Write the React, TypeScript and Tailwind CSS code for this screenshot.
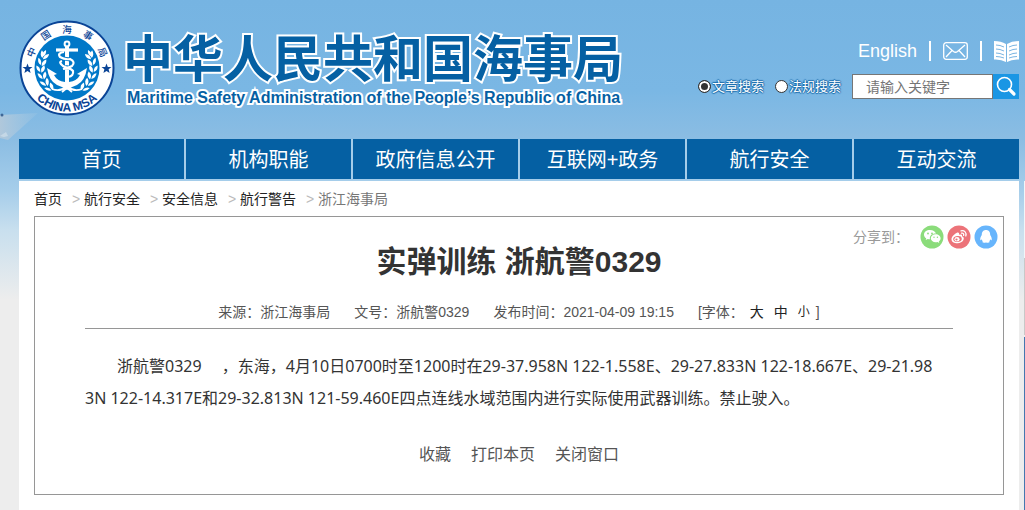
import React from 'react';

const navItems = ['首页', '机构职能', '政府信息公开', '互联网+政务', '航行安全', '互动交流'];

const crumbs = ['首页', '航行安全', '安全信息', '航行警告'];

const notice =
  '浙航警0329\u3000\u00a0，东海，4月10日0700时至1200时在29-37.958N 122-1.558E、29-27.833N 122-18.667E、29-21.983N 122-14.317E和29-32.813N 121-59.460E四点连线水域范围内进行实际使用武器训练。禁止驶入。';

// characters round the top of the badge, with their angle from the vertical
const ringTop = [
  { char: '中', angle: -66 },
  { char: '国', angle: -33 },
  { char: '海', angle: 0 },
  { char: '事', angle: 33 },
  { char: '局', angle: 66 },
];

const leaves = [
  { x: 24, y: 36, angle: 20 },
  { x: 22, y: 43, angle: 5 },
  { x: 21, y: 50, angle: -8 },
  { x: 23, y: 57, angle: -20 },
  { x: 26, y: 64, angle: -35 },
  { x: 31, y: 69, angle: -50 },
];

const LaurelBranch: React.FC = () => (
  <g fill="#fff">
    {leaves.map(leaf => (
      <g key={leaf.y} transform={`translate(${leaf.x} ${leaf.y}) rotate(${leaf.angle})`}>
        <path d="M0 2Q-4 0 -3 -5Q1 -3 0 2Z" />
        <path d="M1 3Q0 -2 5 -4Q6 1 1 3Z" />
      </g>
    ))}
    <path d="M27 30Q22 33 23 37Q28 35 27 30Z" />
  </g>
);

const Badge: React.FC = () => (
  <svg viewBox="0 0 96 96" className="size-24 shrink-0" role="img" aria-label="中国海事局">
    <circle cx="48" cy="48" r="46.5" fill="#fff" stroke="#0a4496" strokeWidth="2" />
    <circle cx="48" cy="48" r="32.5" fill="#0078c8" />
    <LaurelBranch />
    <g transform="matrix(-1 0 0 1 96 0)">
      <LaurelBranch />
    </g>
    <g fill="none" stroke="#fff">
      <circle cx="48" cy="24" r="2.4" strokeWidth="2" />
      <path d="M37 30H59" strokeWidth="3.2" />
      <path d="M48 27V62" strokeWidth="4" />
      <path d="M33 69Q41 72 47 67L53 72M63 69Q55 72 49 67L43 72" strokeWidth="1.8" />
    </g>
    <g fill="none" stroke="#0078c8" strokeWidth="4">
      <path d="M43 37Q47 40 52 39M44 48Q50 46 53 50" />
    </g>
    <path
      d="M45 32Q38 33 41 37Q46 40 51 39Q57 42 53 46Q48 49 44 46Q39 42 43 41M44 49Q51 47 54 51Q55 56 49 57"
      fill="none"
      stroke="#fff"
      strokeWidth="2.2"
    />
    <path
      d="M28 48L38 54L35 55Q38 61 46 62V55H50V62Q58 61 61 55L58 54L68 48Q66 61 58 65Q52 67 48 70Q44 67 38 65Q30 61 28 48Z"
      fill="#fff"
    />
    <g fill="#0a4496">
      {ringTop.map(item => (
        <text
          key={item.char}
          x="48"
          y="12.5"
          textAnchor="middle"
          fontSize="9.5"
          fontWeight="500"
          fontFamily="'Noto Sans CJK SC', sans-serif"
          transform={`rotate(${item.angle} 48 48)`}
        >
          {item.char}
        </text>
      ))}
      <path id="badge-arc" d="M4.500 48A43.500 43.500 0 0 0 91.500 48" fill="none" />
      <text fontSize="12" fontWeight="700" fontFamily="'Liberation Sans', sans-serif" textAnchor="middle">
        <textPath href="#badge-arc" startOffset="50%">CHINA MSA</textPath>
      </text>
      <path d="M8.500 43.500L9.800 47H13.500L10.600 49.300L11.600 53L8.500 50.900L5.400 53L6.400 49.300L3.500 47H7.200Z" />
      <path d="M87.500 43.500L88.800 47H92.500L89.600 49.300L90.600 53L87.500 50.900L84.400 53L85.400 49.300L82.500 47H86.200Z" />
    </g>
  </svg>
);

const Ship: React.FC = () => (
  <svg viewBox="0 0 60 50" className="absolute left-0 top-[102px] h-[50px] w-[60px]" aria-hidden="true">
    <defs>
      <linearGradient id="hull" x1="0" x2="1" y1="0" y2="0">
        <stop offset="0" stopColor="#b5c9da" stopOpacity="0.9" />
        <stop offset="1" stopColor="#a9cbe3" stopOpacity="0.2" />
      </linearGradient>
    </defs>
    <path d="M0 13L38 11L8 38L0 36Z" fill="url(#hull)" />
    <path d="M0 34L6 30L8 34L4 35Z" fill="#d5e2ec" opacity="0.6" />
    <circle cx="2" cy="13" r="1.500" fill="#3f6796" />
  </svg>
);

const MailIcon: React.FC = () => (
  <svg viewBox="0 0 25 18" className="h-[18px] w-[25px]" fill="none" stroke="#fff" strokeWidth="1.3">
    <rect x="0.700" y="0.700" width="23.600" height="16.600" rx="2.500" />
    <path d="M3 3L10.500 9.500Q12.500 11 14.500 9.500L22 3M3 15L9 8.500M22 15L16 8.500" />
  </svg>
);

const BookIcon: React.FC = () => (
  <svg viewBox="0 0 25 21" className="h-[21px] w-[25px]">
    <path d="M0 0Q7 0 12 3V21Q7 18 0 18.500ZM25 0Q18 0 13 3V21Q18 18 25 18.500Z" fill="#fff" />
    <path
      d="M2 4Q6 4 10 6M2 8Q6 8 10 10M2 12Q6 12 10 14M2 15.500Q6 15.500 10 17M23 4Q19 4 15 6M23 8Q19 8 15 10M23 12Q19 12 15 14M23 15.500Q19 15.500 15 17"
      fill="none"
      stroke="#7ab5e2"
      strokeWidth="1"
    />
  </svg>
);

const SearchIcon: React.FC = () => (
  <svg viewBox="0 0 26 25" className="h-[25px] w-[26px]" fill="none" stroke="#fff">
    <circle cx="11.500" cy="10.500" r="7" strokeWidth="1.600" />
    <path d="M16.500 15.500L21 20" strokeWidth="3.200" strokeLinecap="round" />
  </svg>
);

const WechatIcon: React.FC = () => (
  <svg viewBox="0 0 24 24" className="size-6">
    <circle cx="12" cy="12" r="11.500" fill="#8bdc7b" />
    <path d="M10 5C6.500 5 4 7 4 9.700C4 11.200 4.900 12.500 6.200 13.300L5.700 15L7.800 14C8.500 14.200 9.200 14.300 10 14.300C9 10.800 12.500 8.300 16 8.600C15.400 6.500 13 5 10 5Z" fill="#fff" />
    <path d="M15.700 9.300C12.900 9.300 10.800 11.100 10.800 13.300C10.800 15.600 13 17.300 15.700 17.300C16.300 17.300 16.900 17.200 17.500 17L19.300 18L18.800 16.400C20 15.700 20.600 14.600 20.600 13.300C20.600 11.100 18.400 9.300 15.700 9.300Z" fill="#fff" />
    <g fill="#8bdc7b">
      <circle cx="8" cy="8.500" r="0.900" />
      <circle cx="12" cy="8.500" r="0.900" />
      <circle cx="14" cy="12.200" r="0.700" />
      <circle cx="17.400" cy="12.200" r="0.700" />
    </g>
  </svg>
);

const WeiboIcon: React.FC = () => (
  <svg viewBox="0 0 24 24" className="size-6">
    <circle cx="12" cy="12" r="11.500" fill="#ec7379" />
    <path d="M9.500 8C11.500 7 12.500 8 12 9.800C14 9 15.600 9.500 15 11.300C19 12.800 16 18.300 10.500 18.300C7 18.300 4.500 16.700 4.500 14.200C4.500 12 7 9.200 9.500 8Z" fill="#fff" />
    <ellipse cx="10.500" cy="14" rx="4.300" ry="3" fill="#ec7379" transform="rotate(-8 10.500 14)" />
    <ellipse cx="10" cy="14.200" rx="2.600" ry="2.200" fill="#fff" />
    <circle cx="9.500" cy="14.500" r="1.100" fill="#ec7379" />
    <path d="M14 5.800C17.500 5 19.800 7.800 18.800 11M14.500 8.200C16.200 7.900 17.100 9 16.600 10.500" fill="none" stroke="#fff" strokeWidth="1.300" strokeLinecap="round" />
  </svg>
);

const QQIcon: React.FC = () => (
  <svg viewBox="0 0 24 24" className="size-6">
    <circle cx="12" cy="12" r="11.500" fill="#67b5fc" />
    <path d="M12 5C9 5 7.700 7.300 7.800 10C6.700 11.600 6 13.200 6.300 15C6.500 15.500 7.200 15 7.700 14.200C7.900 15.100 8.300 15.700 8.800 16.200C7.500 17.500 9.500 18 12 17.400C14.500 18 16.500 17.500 15.200 16.200C15.700 15.700 16.100 15.100 16.300 14.200C16.800 15 17.500 15.500 17.700 15C18 13.200 17.300 11.600 16.200 10C16.300 7.300 15 5 12 5Z" fill="#fff" />
  </svg>
);

const shareTargets = [
  { name: '微信', Icon: WechatIcon },
  { name: '微博', Icon: WeiboIcon },
  { name: 'QQ', Icon: QQIcon },
];

const SearchType: React.FC<{ id: string; label: string; checked?: boolean }> = ({ id, label, checked }) => (
  <div className="flex items-center">
    <input
      type="radio"
      id={id}
      name="searchType"
      defaultChecked={checked}
      className="size-[13px] appearance-none rounded-full border border-[#333] bg-white checked:bg-[#333] checked:shadow-[inset_0_0_0_2px_#fff]"
    />
    <label
      htmlFor={id}
      className="pl-px text-[13px] text-white [text-shadow:1px_0_1px_#1a6cab,-1px_0_1px_#1a6cab,0_1px_1px_#1a6cab,0_-1px_1px_#1a6cab]"
    >
      {label}
    </label>
  </div>
);

const Header: React.FC = () => (
  <header className="flex h-[139px] items-start justify-between pt-5">
    <div className="flex">
      <Badge />
      <div className="pl-2 pt-3 font-bold whitespace-nowrap text-[#0560a3] [-webkit-text-stroke:4px_white] [paint-order:stroke_fill]">
        <h1 className="text-[50px] leading-[56px]">中华人民共和国海事局</h1>
        <p className="pl-1 text-base leading-5">Maritime Safety Administration of the People’s Republic of China</p>
      </div>
    </div>
    <div className="flex flex-col items-end gap-[11px] pt-[19px]">
      <div className="flex items-center text-lg leading-6 text-white">
        <a href="#english">English</a>
        <span className="mx-3 h-5 w-0.5 bg-white" />
        <a href="#mail" aria-label="邮箱"><MailIcon /></a>
        <span className="mx-3 h-5 w-0.5 bg-white" />
        <a href="#reader" aria-label="阅读"><BookIcon /></a>
      </div>
      <form className="flex items-center" onSubmit={e => e.preventDefault()}>
        <div className="flex gap-[11px] pr-[11px]">
          <SearchType id="article" label="文章搜索" checked />
          <SearchType id="law" label="法规搜索" />
        </div>
        <input
          type="text"
          aria-label="关键字"
          placeholder="请输入关键字"
          className="h-[25px] w-[141px] border border-[#767676] bg-white pl-[13px] text-sm text-[#333] outline-none placeholder:text-[#757575]"
        />
        <button type="submit" aria-label="搜索" className="bg-[#1a96e4]">
          <SearchIcon />
        </button>
      </form>
    </div>
  </header>
);

const Article: React.FC = () => (
  <article className="border border-[#969696] pb-[25px] pt-2">
    <div className="flex items-center justify-end gap-[3px] pr-[5px]">
      <span className="pr-2 text-sm text-[#999]">分享到：</span>
      {shareTargets.map(({ name, Icon }) => (
        <button key={name} type="button" aria-label={name}>
          <Icon />
        </button>
      ))}
    </div>
    <div className="px-[50px]">
      <h2 className="text-center text-[30px] leading-[26px] font-bold text-[#333]">实弹训练 浙航警0329</h2>
      <div className="mt-[25px] flex justify-center gap-6 border-b border-[#969696] pb-1 text-sm leading-6 text-[#555]">
        <span>来源：浙江海事局</span>
        <span>文号：浙航警0329</span>
        <span>发布时间：2021-04-09 19:15</span>
        <span className="flex">
          [字体：
          <span className="flex gap-2.5 px-1.5 text-[#222]">
            <button type="button">大</button>
            <button type="button">中</button>
            <button type="button" className="text-xs">小</button>
          </span>
          ]
        </span>
      </div>
      <p className="mt-[21px] pr-4 indent-[32px] text-base leading-8 break-all text-[#333] font-['Noto_Sans','Noto_Sans_CJK_SC',sans-serif]">
        {notice}
      </p>
      <div className="mt-[27px] flex justify-center gap-5 text-base leading-7 text-[#555]">
        <button type="button">收藏</button>
        <button type="button">打印本页</button>
        <button type="button">关闭窗口</button>
      </div>
    </div>
  </article>
);

export default function App() {
  return (
    <div
      lang="zh-CN"
      className="relative min-h-screen overflow-hidden bg-[#ededed] bg-[linear-gradient(to_bottom,#76b4e2_0,#7ab7e4_90px,#8bbde3_139px,#a5cdea_190px,#c8dfee_230px,#ededed_300px,#ededed_100%)] pl-[19px] pr-1.5 font-['Liberation_Sans','Noto_Sans_CJK_SC',sans-serif]"
    >
      <Ship />
      <Header />
      <nav className="grid grid-cols-6 gap-0.5 border-b-2 border-[#a5cdea] bg-[#a5cdea]">
        {navItems.map(item => (
          <a key={item} href="#nav" className="h-10 bg-[#0560a3] text-center text-[20px] leading-[42px] text-white">
            {item}
          </a>
        ))}
      </nav>
      <main className="min-h-[329px] bg-white px-[15px] pb-4">
        <div className="flex pt-1.5 pb-1 text-sm leading-[25px] text-[#222]">
          {crumbs.map(crumb => (
            <React.Fragment key={crumb}>
              <a href="#crumb">{crumb}</a>
              <span className="w-[22px] pl-2.5 text-[#bbb]">&gt;</span>
            </React.Fragment>
          ))}
          <span className="text-[#777]">浙江海事局</span>
        </div>
        <Article />
      </main>
      {/* edge of the floating side panel */}
      <aside className="absolute right-0 top-[181px] flex w-px flex-col">
        <span className="h-[77px] bg-[#f2f5f8]" />
        <span className="h-[77px] bg-[#c8c8c8]" />
        <span className="mt-0.5 h-[173px] bg-[#4577b0]" />
      </aside>
    </div>
  );
}
